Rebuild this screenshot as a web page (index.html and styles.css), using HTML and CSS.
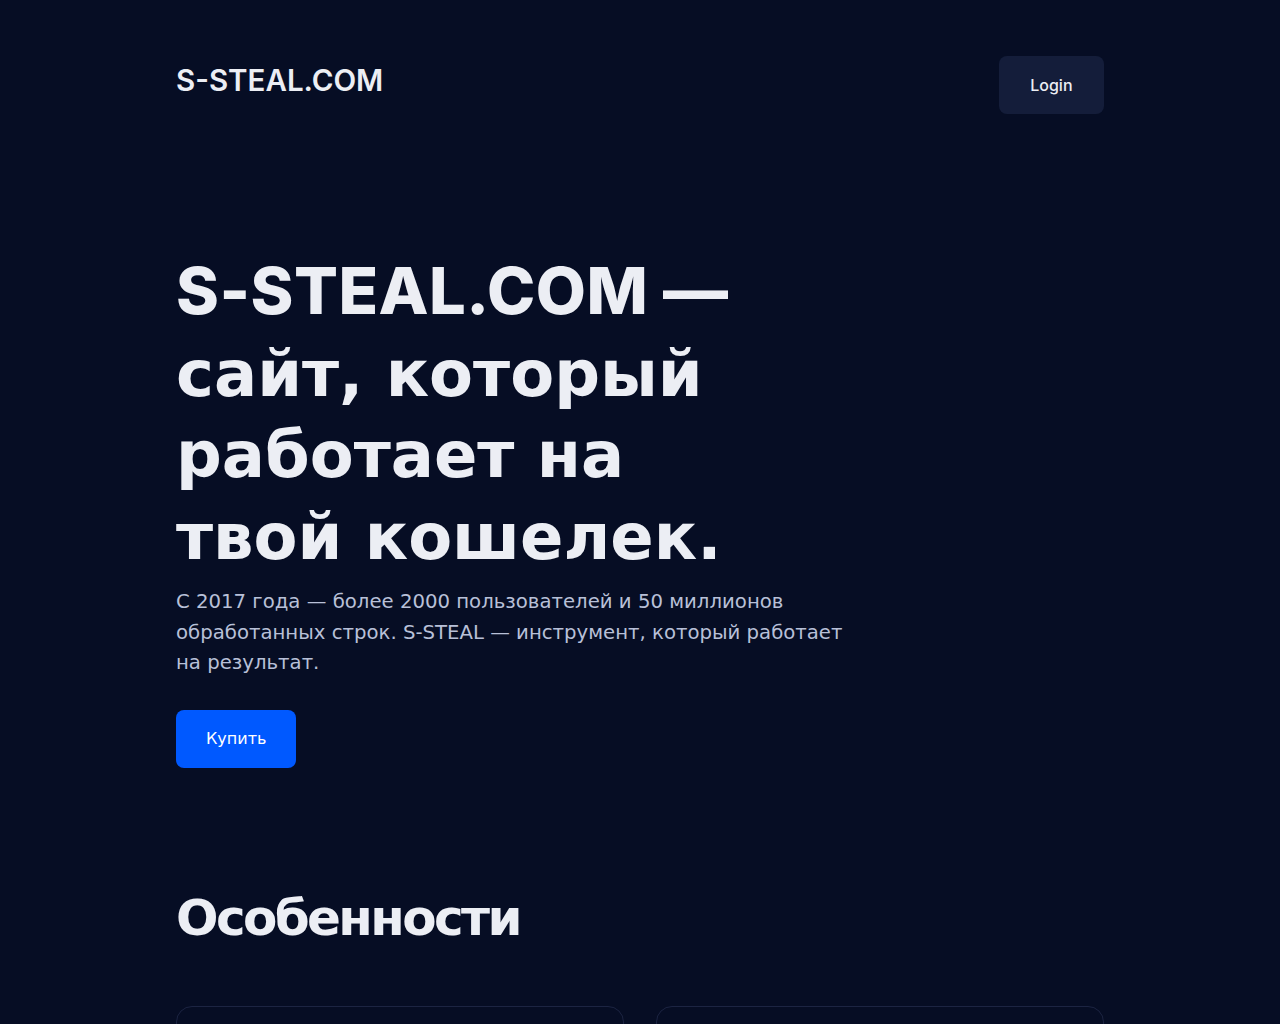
FILE: index.html
```html
<!DOCTYPE html>
<html lang="ru">
<head>
<meta charset="utf-8">
<title>S-STEAL.COM</title>
<link rel="stylesheet" href="styles.css">
</head>
<body>
<div class="container">
  <header class="header">
    <div class="logo">S-STEAL.COM</div>
    <a class="login" href="#">Login</a>
  </header>
  <section class="hero">
    <h1 class="hero-title"><span class="lat">S-STEAL.COM —</span> сайт, который работает на твой кошелек.</h1>
    <p class="hero-text">С 2017 года — более 2000 пользователей и 50 миллионов обработанных строк. S-STEAL — инструмент, который работает на результат.</p>
    <a class="buy" href="#">Купить</a>
  </section>
  <section class="features">
    <h2 class="features-title">Особенности</h2>
    <div class="cards">
      <div class="card"></div>
      <div class="card"></div>
    </div>
  </section>
</div>
</body>
</html>
```
FILE: styles.css
```css
html, body {
  margin: 0;
  padding: 0;
  background: #060d24;
  color: #eceef4;
  font-family: "DejaVu Sans", sans-serif;
}
.container {
  max-width: 928px;
  margin: 0 auto;
}
.header {
  display: flex;
  justify-content: space-between;
  align-items: flex-start;
  padding-top: 56px;
}
.logo {
  font-family: "Inter", sans-serif;
  font-weight: 600;
  font-size: 29.5px;
  line-height: 48px;
  color: #eceef4;
}
.login {
  display: block;
  background: #141d3a;
  color: #eceef4;
  text-decoration: none;
  font-family: "Inter", sans-serif;
  font-weight: 500;
  font-size: 16px;
  line-height: 22px;
  padding: 18px 31.5px;
  border-radius: 8px;
}
.hero {
  padding-top: 136px;
}
.hero-title {
  margin: 0;
  font-size: 64px;
  line-height: 81.5px;
  font-weight: 700;
  max-width: 600px;
  color: #eceef4;
}
.lat {
  font-family: "Inter", sans-serif;
  font-weight: 800;
  font-size: 65px;
  letter-spacing: 0.5px;
}
.hero-text {
  margin: 9px 0 0;
  font-size: 19.7px;
  line-height: 30.5px;
  color: #b8c0d8;
  max-width: 680px;
}
.buy {
  display: inline-block;
  margin-top: 31px;
  background: #0059ff;
  color: #ffffff;
  text-decoration: none;
  font-size: 16px;
  line-height: 22px;
  padding: 18px 30px;
  border-radius: 8px;
}
.features {
  padding-top: 120px;
}
.features-title {
  margin: 0;
  font-size: 50px;
  line-height: 60px;
  font-weight: 700;
  letter-spacing: -2.6px;
  color: #eceef4;
}
.cards {
  display: grid;
  grid-template-columns: 1fr 1fr;
  gap: 32px;
  margin-top: 58px;
}
.card {
  height: 200px;
  border: 1px solid #1c2442;
  border-radius: 16px;
  background: #060d24;
}
```
